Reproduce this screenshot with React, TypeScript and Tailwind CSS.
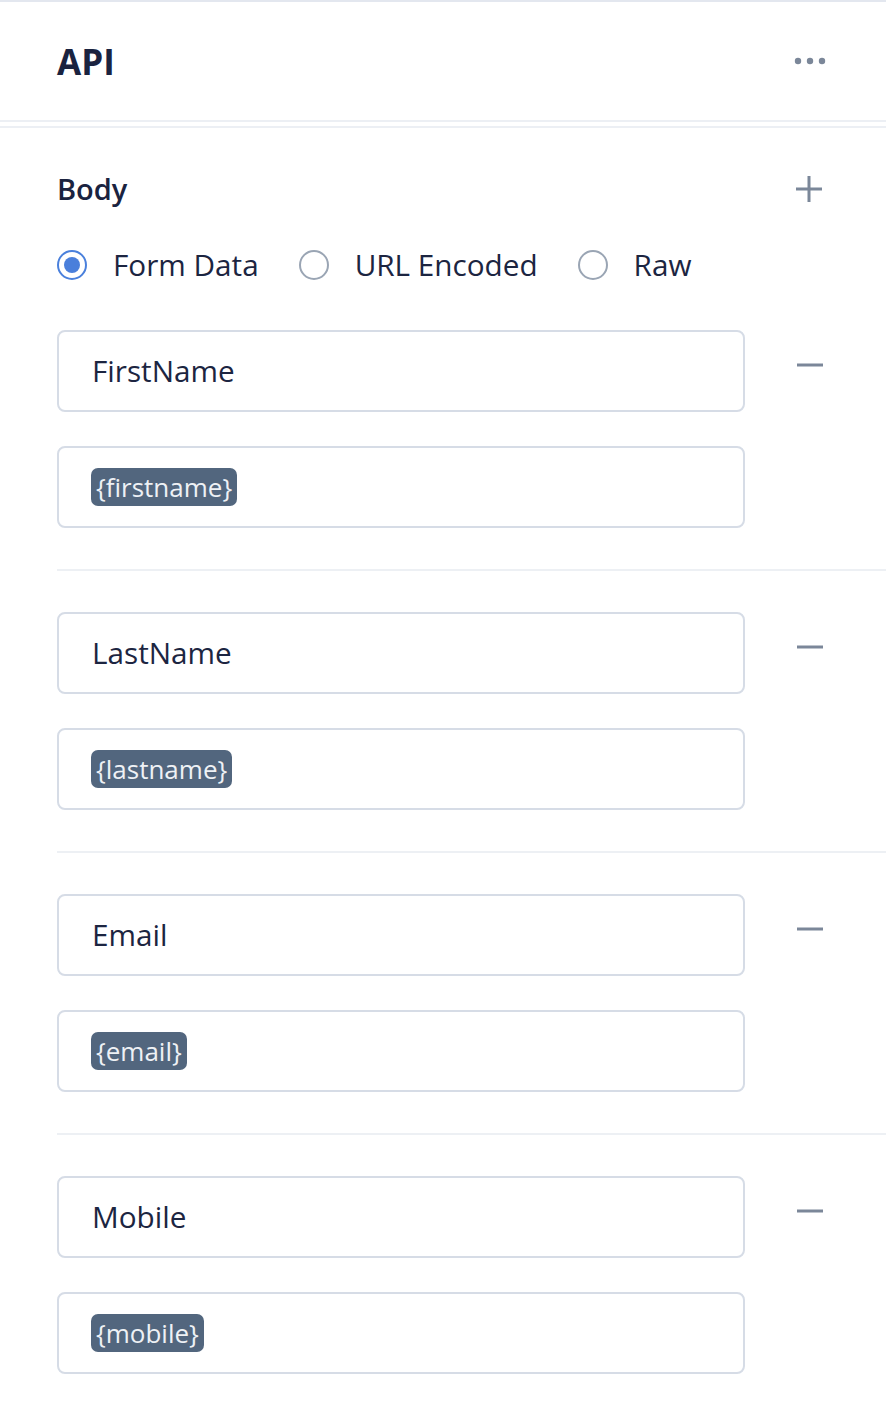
import React from "react";

type Field = { key: string; value: string };

const FIELDS: Field[] = [
  { key: "FirstName", value: "{firstname}" },
  { key: "LastName", value: "{lastname}" },
  { key: "Email", value: "{email}" },
  { key: "Mobile", value: "{mobile}" },
];

const MODES = ["Form Data", "URL Encoded", "Raw"];

function PlusIcon() {
  return (
    <svg width="28" height="28" viewBox="0 0 28 28" fill="none" aria-hidden>
      <path d="M14 1v26M1 14h26" stroke="#7b8799" strokeWidth="3" />
    </svg>
  );
}

function MinusIcon() {
  return (
    <svg width="28" height="28" viewBox="0 0 28 28" fill="none" aria-hidden>
      <path d="M1 14h26" stroke="#7b8799" strokeWidth="3" />
    </svg>
  );
}

function Radio({ label, checked }: { label: string; checked?: boolean }) {
  return (
    <label className="flex items-center gap-[26px]">
      <span
        className={
          checked
            ? "flex h-[30px] w-[30px] items-center justify-center rounded-full border-[2.5px] border-[#4a80dc]"
            : "flex h-[30px] w-[30px] items-center justify-center rounded-full border-[2.5px] border-[#9aa5b4]"
        }
      >
        {checked && <span className="h-[16px] w-[16px] rounded-full bg-[#4a7fdb]" />}
      </span>
      <span className="text-[29.7px] leading-[40px] text-[#1c2541]">{label}</span>
    </label>
  );
}

function FieldGroup({ field, first }: { field: Field; first: boolean }) {
  return (
    <div className={first ? "pb-[41px]" : "border-t-2 border-[#edf0f4] pt-[41px] pb-[41px]"}>
      <div className="flex items-start">
        <div className="flex h-[82px] w-[688px] items-center rounded-[8px] border-2 border-[#d6dce6] pl-[33px] text-[29.7px] text-[#1c2541]">
          {field.key}
        </div>
        <div className="ml-[51px] mt-[21px]">
          <MinusIcon />
        </div>
      </div>
      <div className="mt-[34px] flex h-[82px] w-[688px] items-center rounded-[8px] border-2 border-[#d6dce6] pl-[32px]">
        <span className="rounded-[7px] bg-[#52667e] px-[5px] text-[26px] leading-[38px] text-[#eef1f5]">
          {field.value}
        </span>
      </div>
    </div>
  );
}

export default function App() {
  return (
    <div className="min-h-[1414px] w-[886px] bg-white font-['Open_Sans',sans-serif]">
      {/* Header */}
      <div className="flex h-[122px] items-center justify-between border-t-2 border-b-2 border-t-[#e3e7ef] border-b-[#eceff4] pl-[57px] pr-[60px]">
        <h1 className="text-[35px] font-bold leading-none text-[#1a2340]">API</h1>
        <svg width="32" height="8" viewBox="0 0 32 8" aria-hidden>
          <circle cx="4" cy="4" r="3.2" fill="#7b8799" />
          <circle cx="16" cy="4" r="3.2" fill="#7b8799" />
          <circle cx="28" cy="4" r="3.2" fill="#7b8799" />
        </svg>
      </div>
      <div className="mt-[4px] border-t-2 border-[#eceff4]" />

      {/* Body section */}
      <div className="pl-[57px]">
        <div className="mt-[41px] flex h-[40px] items-center justify-between pr-[63px]">
          <h2 className="text-[29px] font-semibold text-[#1a2340]">Body</h2>
          <PlusIcon />
        </div>

        <div className="mt-[41px] flex h-[30px] items-center gap-[40px]">
          {MODES.map((m, i) => (
            <Radio key={m} label={m} checked={i === 0} />
          ))}
        </div>

        <div className="mt-[50px]">
          {FIELDS.map((f, i) => (
            <FieldGroup key={f.key} field={f} first={i === 0} />
          ))}
        </div>
      </div>
    </div>
  );
}
